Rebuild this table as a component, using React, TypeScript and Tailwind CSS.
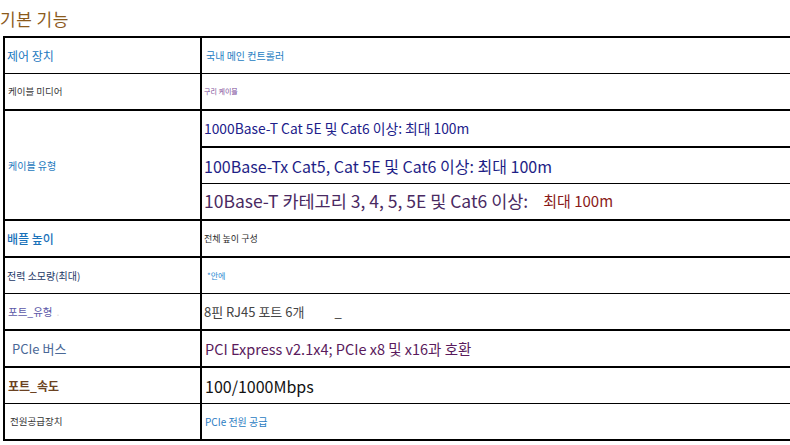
import React from "react";

const F = "font-['Noto_Sans_CJK_KR',sans-serif]";

function Row({
  top,
  left,
  right,
}: {
  top: string;
  left: React.ReactNode;
  right: React.ReactNode;
}) {
  return (
    <div className={`flex ${top} border-black`}>
      <div className="w-[195px] h-[35px] flex items-center shrink-0">{left}</div>
      <div className="flex-1 h-[35px] flex items-center border-l-2 border-black">{right}</div>
    </div>
  );
}

export default function App() {
  return (
    <div className={`w-[790px] h-[445px] overflow-hidden bg-white ${F}`}>
      <div className="h-[36px] flex items-center">
        <span className="text-[17px] leading-none text-[#8b5a1c] tracking-[0.5px]">기본 기능</span>
      </div>
      <div className="ml-[3px] w-[800px] border-l-2 border-b-2 border-black">
        <Row
          top="border-t-2"
          left={<span className="pl-[2px] text-[12px] text-[#1b78c0]">제어 장치</span>}
          right={<span className="pl-[4px] text-[10px] text-[#1c7cc2]">국내 메인 컨트롤러</span>}
        />
        <Row
          top="border-t"
          left={<span className="pl-[3px] text-[9.5px] text-[#3a3a3a]">케이블 미디어</span>}
          right={<span className="pl-[2px] text-[7px] text-[#7b4b98]">구리 케이블</span>}
        />
        <div className="flex border-t-2 border-black">
          <div className="w-[195px] flex items-center shrink-0">
            <span className="pl-[3px] text-[10px] text-[#1c78bd]">케이블 유형</span>
          </div>
          <div className="flex-1 border-l-2 border-black">
            <div className="h-[35px] flex items-center">
              <span className="pl-[2px] text-[13.8px] text-[#20208a]">1000Base-T Cat 5E 및 Cat6 이상: 최대 100m</span>
            </div>
            <div className="h-[35px] flex items-center border-t-2 border-black box-content">
              <span className="pl-[2px] text-[16px] text-[#1e1e86]">100Base-Tx Cat5, Cat 5E 및 Cat6 이상: 최대 100m</span>
            </div>
            <div className="h-[35px] flex items-center border-t border-black box-content">
              <span className="pl-[2px] text-[17.5px] text-[#4a2a62]">10Base-T 카테고리 3, 4, 5, 5E 및 Cat6 이상:</span>
              <span className="ml-[15px] text-[15px] text-[#8a1a1a]">최대 100m</span>
            </div>
          </div>
        </div>
        <Row
          top="border-t-2"
          left={<span className="pl-[2px] text-[12px] font-medium text-[#1b72ba]">배플 높이</span>}
          right={<span className="pl-[2px] text-[9px] text-[#2a2a2a]">전체 높이 구성</span>}
        />
        <Row
          top="border-t-2"
          left={<span className="pl-[2px] text-[10px] text-[#1d3866]">전력 소모량(최대)</span>}
          right={<span className="pl-[5px] text-[8px] text-[#2a8ad2]">*안에</span>}
        />
        <Row
          top="border-t"
          left={
            <span className="pl-[3px] text-[10.5px] text-[#5c58a8]">
              포트_유형<span className="ml-[4px] text-[#ddd]">.</span>
            </span>
          }
          right={
            <span className="pl-[2px] text-[13px] text-[#444]">
              8핀 RJ45 포트 6개<span className="ml-[30px] text-[#333]">_</span>
            </span>
          }
        />
        <Row
          top="border-t-2"
          left={<span className="pl-[7px] text-[13px] text-[#4a6896]">PCIe 버스</span>}
          right={<span className="pl-[3px] text-[14.5px] text-[#5a1a5c]">PCI Express v2.1x4; PCIe x8 및 x16과 호환</span>}
        />
        <Row
          top="border-t-2"
          left={<span className="pl-[3px] text-[12px] font-semibold text-[#6b4222]">포트_속도</span>}
          right={<span className="pl-[3px] text-[16px] text-[#111]">100/1000Mbps</span>}
        />
        <Row
          top="border-t"
          left={<span className="pl-[5px] text-[9.5px] text-[#333]">전원공급장치</span>}
          right={<span className="pl-[3px] text-[10px] text-[#2a7cc2]">PCIe 전원 공급</span>}
        />
      </div>
    </div>
  );
}
